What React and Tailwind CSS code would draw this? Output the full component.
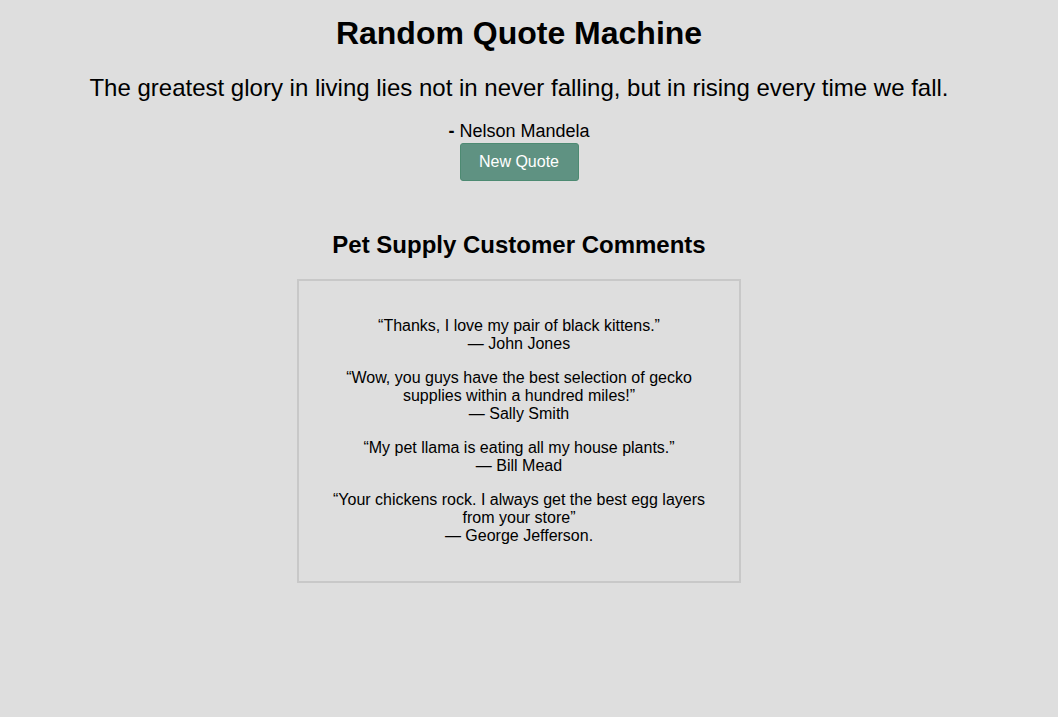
import React, { useState } from 'react';

const quotes = [
  { text: 'The greatest glory in living lies not in never falling, but in rising every time we fall.', author: 'Nelson Mandela' },
  { text: 'The way to get started is to quit talking and begin doing.', author: 'Walt Disney' },
];

const comments = [
  { text: 'Thanks, I love my pair of black kittens.', author: 'John Jones' },
  { text: 'Wow, you guys have the best selection of gecko supplies within a hundred miles!', author: 'Sally Smith' },
  { text: 'My pet llama is eating all my house plants.', author: 'Bill Mead' },
  { text: 'Your chickens rock. I always get the best egg layers from your store', author: 'George Jefferson.' },
];

const App = () => {
  const [index, setIndex] = useState(0);
  const quote = quotes[index];

  return (
    <div className="min-h-[717px] bg-[#dedede] text-black text-center font-['Liberation_Sans',Arial,sans-serif] pt-[15px] pr-[20px]">
      <h1 className="text-[32px] leading-[37px] font-bold">Random Quote Machine</h1>

      {/* Quote */}
      <p className="mt-[22px] text-[24px] leading-[28px]">{quote.text}</p>
      <p className="mt-[19px] text-[18px] leading-[21px]">
        <span className="font-bold">-</span> {quote.author}
      </p>
      <button
        onClick={() => setIndex((i) => (i + 1) % quotes.length)}
        className="mt-[1px] w-[119px] h-[38px] rounded-[3px] border border-[#4d8a72] bg-[#5f9282] text-white text-[16px]"
      >
        New Quote
      </button>

      {/* Comments */}
      <h2 className="mt-[50px] text-[24px] leading-[28px] font-bold">Pet Supply Customer Comments</h2>
      <div className="mx-auto mt-[20px] w-[444px] border-2 border-[#c8c8c8] p-[20px] text-[16px] leading-[18px]">
        {comments.map((c) => (
          <p key={c.author} className="my-[16px]">
            “{c.text}”
            <br />— {c.author}
          </p>
        ))}
      </div>
    </div>
  );
};

export default App;
